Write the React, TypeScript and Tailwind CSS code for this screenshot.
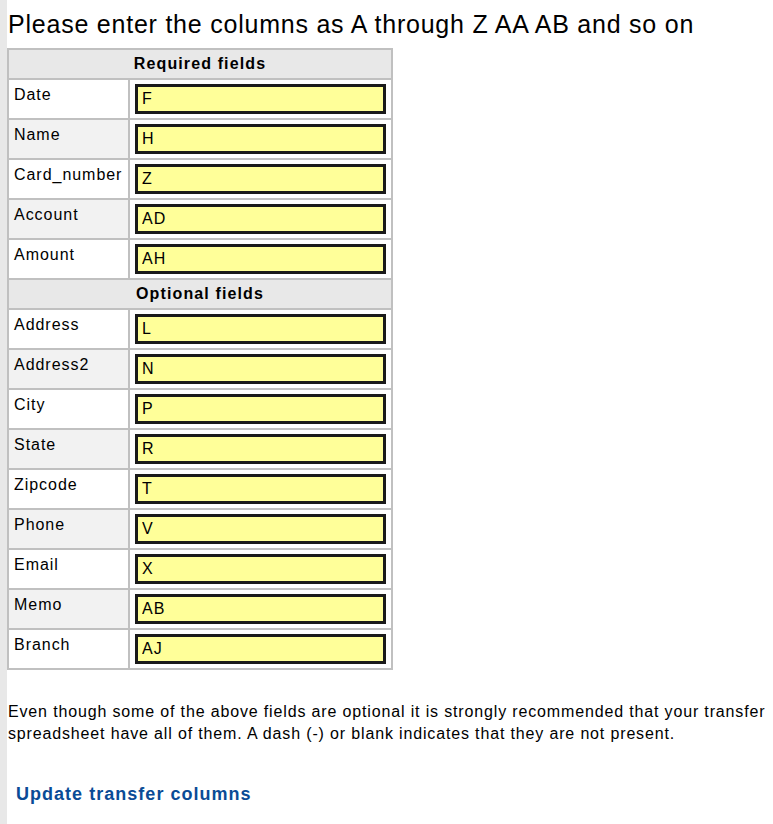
import React from "react";

const required = [
  ["Date", "F"],
  ["Name", "H"],
  ["Card_number", "Z"],
  ["Account", "AD"],
  ["Amount", "AH"],
];
const optional = [
  ["Address", "L"],
  ["Address2", "N"],
  ["City", "P"],
  ["State", "R"],
  ["Zipcode", "T"],
  ["Phone", "V"],
  ["Email", "X"],
  ["Memo", "AB"],
  ["Branch", "AJ"],
];

function Header({ title }: { title: string }) {
  return (
    <tr>
      <th
        colSpan={2}
        className="border border-[#c0c0c0] bg-[#e8e8e8] py-[5px] text-[16px] leading-[18px] font-bold tracking-[0.07em] text-black text-center"
      >
        {title}
      </th>
    </tr>
  );
}

function Row({ label, value, idx }: { label: string; value: string; idx: number }) {
  return (
    <tr>
      <td
        className={
          "border border-[#c0c0c0] align-top pl-[5px] pt-[6px] text-[16px] leading-[18px] tracking-[0.06em] text-black w-[121px] whitespace-nowrap " +
          (idx % 2 === 1 ? "bg-[#f2f2f2]" : "bg-white")
        }
      >
        {label}
      </td>
      <td className="border border-[#c0c0c0] bg-white px-[5px] py-[4px]">
        <input
          type="text"
          defaultValue={value}
          className="block w-[251px] h-[30px] border-[3px] border-[#1a1a1a] bg-[#ffff99] pl-[4px] text-[16px] leading-[18px] tracking-[0.06em] text-black outline-none font-['Liberation_Sans',Arial,sans-serif]"
        />
      </td>
    </tr>
  );
}

export default function App() {
  return (
    <div className="min-h-[824px] bg-white font-['Liberation_Sans',Arial,sans-serif] text-black flex">
      <div className="w-[7px] shrink-0 bg-[#e8e8e8]" />
      <div className="flex-1 pl-px">
        <h1 className="pt-[10px] text-[25px] leading-[28px] font-normal tracking-[0.031em] whitespace-nowrap">
          Please enter the columns as A through Z AA AB and so on
        </h1>
        <table className="mt-[10px] -ml-px w-[386px] border-separate border-spacing-0 border border-[#c0c0c0] table-fixed">
          <colgroup>
            <col className="w-[121px]" />
            <col />
          </colgroup>
          <tbody>
            <Header title="Required fields" />
            {required.map(([l, v], i) => (
              <Row key={l} label={l} value={v} idx={i} />
            ))}
            <Header title="Optional fields" />
            {optional.map(([l, v], i) => (
              <Row key={l} label={l} value={v} idx={i} />
            ))}
          </tbody>
        </table>
        <p className="mt-[31px] text-[16px] leading-[22px] tracking-[0.053em]">
          Even though some of the above fields are optional it is strongly recommended that your transfer
          spreadsheet have all of them. A dash (-) or blank indicates that they are not present.
        </p>
        <div className="mt-[38px] pl-[8px]">
          <a href="#" className="text-[18px] leading-[22px] font-bold tracking-[0.057em] text-[#0a4b96] no-underline">
            Update transfer columns
          </a>
        </div>
      </div>
    </div>
  );
}
